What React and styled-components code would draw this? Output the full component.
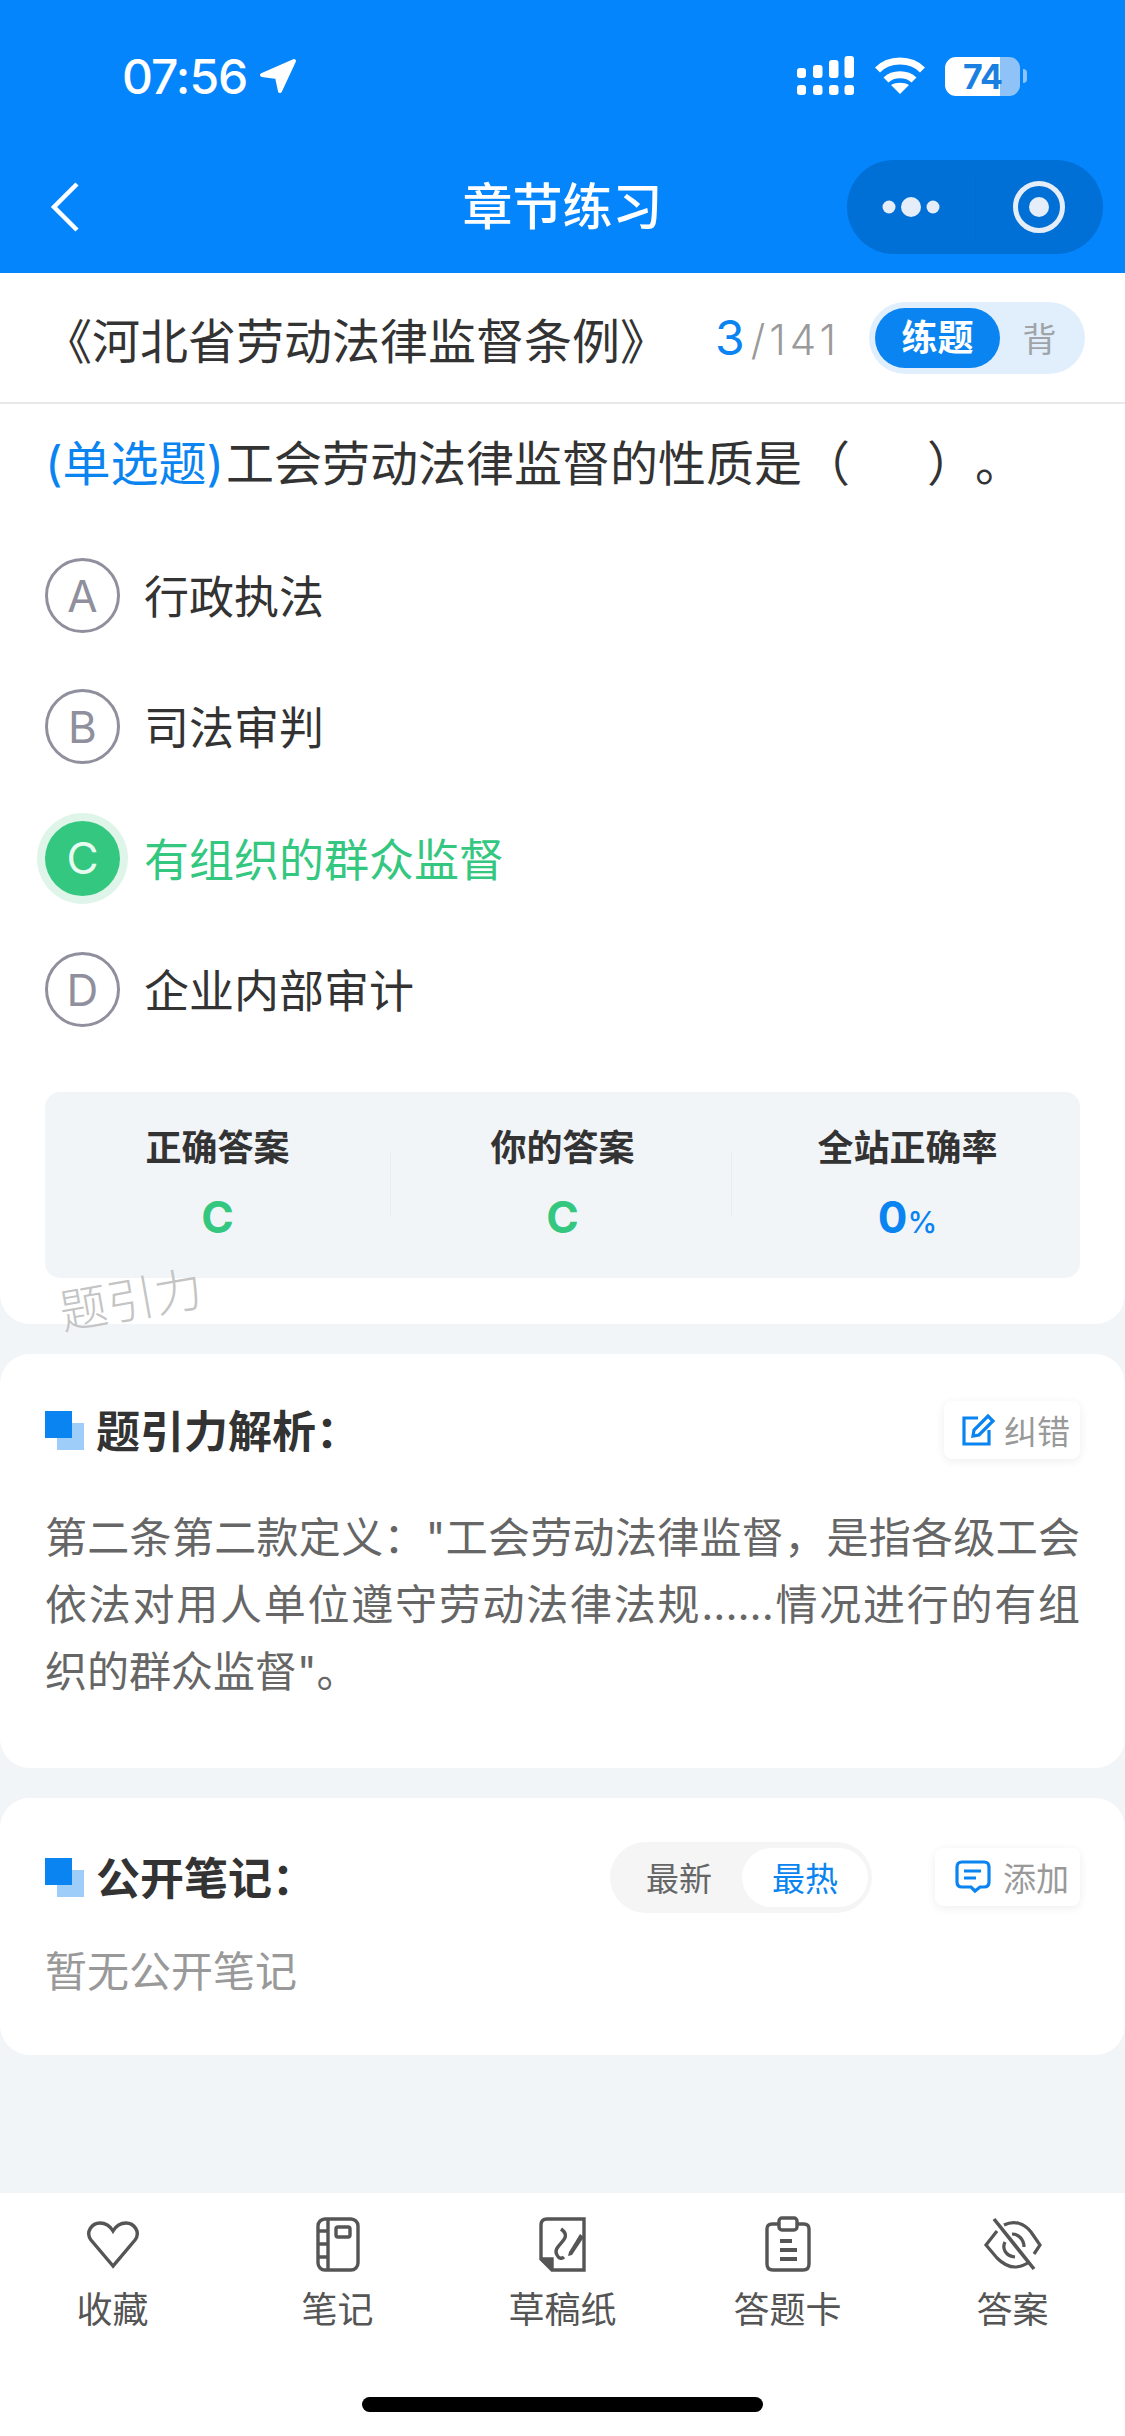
import React from 'react';
import styled, { createGlobalStyle } from 'styled-components';

const GlobalStyle = createGlobalStyle`
  html, body {
    margin: 0;
    padding: 0;
    background: #f2f5f8;
  }
  * {
    box-sizing: border-box;
  }
`;

const BLUE = '#0a84f0';
const GREEN = '#34c77f';
const FONT = '"Inter", "Noto Sans CJK SC", sans-serif';

const options = [
  { key: 'A', text: '行政执法' },
  { key: 'B', text: '司法审判' },
  { key: 'C', text: '有组织的群众监督', correct: true },
  { key: 'D', text: '企业内部审计' },
];

const LocationIcon = () => (
  <svg width="38" height="36" viewBox="0 0 38 36">
    <path d="M35 3 L3 17 L18 19 L21 33 Z" fill="#fff" stroke="#fff" strokeWidth="4" strokeLinejoin="round" />
  </svg>
);

const SignalIcon = () => (
  <svg width="58" height="40" viewBox="0 0 58 40" fill="#fff">
    <rect x="0" y="12" width="9" height="10" rx="3" />
    <rect x="0" y="29" width="9" height="10" rx="3" />
    <rect x="16" y="9" width="9.5" height="13" rx="3" />
    <rect x="16" y="29" width="9.5" height="10" rx="3" />
    <rect x="32" y="4" width="9.5" height="18" rx="3" />
    <rect x="32" y="29" width="9.5" height="10" rx="3" />
    <rect x="47.500" y="0" width="9.500" height="22" rx="3" />
    <rect x="47.500" y="29" width="9.500" height="10" rx="3" />
  </svg>
);

const WifiIcon = () => (
  <svg width="50" height="38" viewBox="0 0 50 38" fill="none" stroke="#fff" strokeWidth="7">
    <path d="M2.500 13 C14 1 36 1 47.500 13" />
    <path d="M11 23 C18 16 32 16 39 23" />
    <path d="M25 37 L16 28 C21 25 29 25 34 28 Z" fill="#fff" stroke="none" />
  </svg>
);

const BackIcon = () => (
  <svg width="30" height="50" viewBox="0 0 30 50" fill="none" stroke="#fff" strokeWidth="4.5">
    <path d="M27 2 L4 25 L27 48" />
  </svg>
);

const DotsIcon = () => (
  <svg width="58" height="24" viewBox="0 0 58 24" fill="#e4edf8">
    <circle cx="7" cy="12" r="6.5" />
    <circle cx="29" cy="12" r="10" />
    <circle cx="51" cy="12" r="6.5" />
  </svg>
);

const TargetIcon = () => (
  <svg width="54" height="54" viewBox="0 0 54 54">
    <circle cx="27" cy="27" r="23.5" fill="none" stroke="#e4edf8" strokeWidth="5" />
    <circle cx="27" cy="27" r="10" fill="#e4edf8" />
  </svg>
);

const EditIcon = () => (
  <svg width="34" height="34" viewBox="0 0 34 34" fill="none" stroke={BLUE} strokeWidth="3.2">
    <path d="M16 5 H2 V31 H27 V17" />
    <path d="M11 23 L12 17 L26 3 L31 8 L17 22 Z" />
  </svg>
);

const CommentIcon = () => (
  <svg width="36" height="34" viewBox="0 0 36 34" fill="none" stroke={BLUE} strokeWidth="3.2">
    <path d="M7 2 H29 Q34 2 34 7 V22 Q34 27 29 27 H25 L20 31 L16 27 H7 Q2 27 2 22 V7 Q2 2 7 2 Z" />
    <path d="M9 11 H26 M9 18 H21" />
  </svg>
);

const HeartIcon = () => (
  <svg width="60" height="60" viewBox="0 0 60 60" fill="none" stroke="#555" strokeWidth="3.4">
    <path d="M30 51 L8 25 C2 17 9 8 17 8 C23 8 27 11 30 16 C33 11 37 8 43 8 C51 8 58 17 52 25 Z" />
  </svg>
);

const NotebookIcon = () => (
  <svg width="60" height="60" viewBox="0 0 60 60" fill="none" stroke="#555" strokeWidth="3.4">
    <rect x="10" y="4" width="40" height="51" rx="7" />
    <path d="M20 4 V55 M10 16 H20 M10 29 H20 M10 42 H20" />
    <rect x="28" y="12" width="14" height="10" rx="2" />
  </svg>
);

const DraftIcon = () => (
  <svg width="60" height="60" viewBox="0 0 60 60" fill="none" stroke="#555" strokeWidth="3.4">
    <path d="M14 4 H51 V55 H19 L8 44 V10 Q8 4 14 4 Z" />
    <path d="M8 44 H19 V55" fill="#555" />
    <path d="M28 14 C42 24 18 30 24 40 C26 44 29 44 31 42" />
    <path d="M36 37 L47 19 L51 22 L39 40 L35 41 Z" fill="#555" stroke="none" />
  </svg>
);

const ClipboardIcon = () => (
  <svg width="60" height="60" viewBox="0 0 60 60" fill="none" stroke="#555" strokeWidth="3.4">
    <path d="M20 9 H14 Q9 9 9 14 V49 Q9 55 15 55 H45 Q51 55 51 49 V14 Q51 9 46 9 H40" />
    <rect x="21" y="3" width="18" height="12" rx="3" />
    <path d="M22 26 H34 M22 35 H39 M22 44 H39" strokeWidth="3.8" />
  </svg>
);

const EyeOffIcon = () => (
  <svg width="60" height="60" viewBox="0 0 60 60" fill="none" stroke="#555" strokeWidth="3.2">
    <path d="M14 16 L3 30 L14 43 C20 49 26 52 32 52 C37 52 42 50 46 47" />
    <path d="M21 10 C31 5 41 8 48 17 L57 30 L51 39" />
    <path d="M22 27 C19 33 22 41 32 42" />
    <path d="M29 19 C35 19 41 24 41 32" />
    <path d="M11 4 L51 54" strokeWidth="3.6" />
  </svg>
);

const tabs = [
  { label: '收藏', icon: <HeartIcon /> },
  { label: '笔记', icon: <NotebookIcon /> },
  { label: '草稿纸', icon: <DraftIcon /> },
  { label: '答题卡', icon: <ClipboardIcon /> },
  { label: '答案', icon: <EyeOffIcon /> },
];

const App = () => {
  return (
    <Page>
      <GlobalStyle />
      <Header>
        <StatusBar>
          <TimeGroup>
            <Time>07:56</Time>
            <LocationIcon />
          </TimeGroup>
          <StatusIcons>
            <SignalIcon />
            <WifiIcon />
            <Battery>
              <BatteryBody>74</BatteryBody>
              <BatteryCap />
            </Battery>
          </StatusIcons>
        </StatusBar>
        <NavBar>
          <BackSlot><BackIcon /></BackSlot>
          <NavTitle>章节练习</NavTitle>
          <Capsule>
            <CapsuleSlot><DotsIcon /></CapsuleSlot>
            <CapsuleDivider />
            <CapsuleSlot><TargetIcon /></CapsuleSlot>
          </Capsule>
        </NavBar>
      </Header>

      <Main>
        <QuestionCard>
          <TitleRow>
            <ChapterTitle>《河北省劳动法律监督条例》</ChapterTitle>
            <Counter>
              <CounterNow>3</CounterNow>
              <CounterTotal>/141</CounterTotal>
            </Counter>
            <ModeToggle>
              <ModeActive>练题</ModeActive>
              <ModeIdle>背</ModeIdle>
            </ModeToggle>
          </TitleRow>

          <Question>
            <QuestionType>(单选题)</QuestionType>工会劳动法律监督的性质是（<BlankGap />）。
          </Question>

          <OptionList>
            {options.map(o => (
              <OptionRow key={o.key}>
                <OptionBadge $correct={o.correct}>{o.key}</OptionBadge>
                <OptionText $correct={o.correct}>{o.text}</OptionText>
              </OptionRow>
            ))}
          </OptionList>

          <StatsBox>
            <StatCol>
              <StatLabel>正确答案</StatLabel>
              <StatValue $color={GREEN}>C</StatValue>
            </StatCol>
            <StatCol $dividerLeft={0}>
              <StatLabel>你的答案</StatLabel>
              <StatValue $color={GREEN}>C</StatValue>
            </StatCol>
            <StatCol $dividerLeft={-4}>
              <StatLabel>全站正确率</StatLabel>
              <StatValue $color={BLUE}>0<Percent>%</Percent></StatValue>
            </StatCol>
          </StatsBox>
          <Watermark>题引力</Watermark>
        </QuestionCard>

        <AnalysisCard>
          <SectionHead>
            <SectionTitleWrap>
              <SectionMark />
              <SectionTitle>题引力解析：</SectionTitle>
            </SectionTitleWrap>
            <SmallButton>
              <EditIcon />
              纠错
            </SmallButton>
          </SectionHead>
          <AnalysisText>
            第二条第二款定义："工会劳动法律监督，是指各级工会依法对用人单位遵守劳动法律法规......情况进行的有组织的群众监督"。
          </AnalysisText>
        </AnalysisCard>

        <NotesCard>
          <SectionHead>
            <SectionTitleWrap>
              <SectionMark />
              <SectionTitle>公开笔记：</SectionTitle>
            </SectionTitleWrap>
            <NotesActions>
              <SortToggle>
                <SortItem>最新</SortItem>
                <SortItem $active>最热</SortItem>
              </SortToggle>
              <SmallButton $wide>
                <CommentIcon />
                添加
              </SmallButton>
            </NotesActions>
          </SectionHead>
          <EmptyNotes>暂无公开笔记</EmptyNotes>
        </NotesCard>
      </Main>

      <TabBar>
        <TabRow>
          {tabs.map(t => (
            <TabItem key={t.label}>
              {t.icon}
              <TabLabel>{t.label}</TabLabel>
            </TabItem>
          ))}
        </TabRow>
        <HomeIndicator />
      </TabBar>
    </Page>
  );
};

export default App;

const Page = styled.div`
  width: 1125px;
  height: 2436px;
  display: flex;
  flex-direction: column;
  overflow: hidden;
  background: #f2f5f8;
  font-family: ${FONT};
`;

const Header = styled.div`
  height: 273px;
  flex-shrink: 0;
  background: #0585fb;
  display: flex;
  flex-direction: column;
`;

const StatusBar = styled.div`
  height: 160px;
  padding: 54px 98px 0 122px;
  display: flex;
  justify-content: space-between;
  align-items: flex-start;
`;

const TimeGroup = styled.div`
  display: flex;
  align-items: center;
  gap: 12px;
  height: 44px;
`;

const Time = styled.span`
  font-family: "Inter", sans-serif;
  font-size: 48px;
  font-weight: 500;
  letter-spacing: -1px;
  color: #fff;
`;

const StatusIcons = styled.div`
  display: flex;
  align-items: center;
  gap: 20px;
  height: 44px;
`;

const Battery = styled.div`
  display: flex;
  align-items: center;
  gap: 3px;
`;

const BatteryBody = styled.div`
  width: 75px;
  height: 39px;
  border-radius: 11px;
  background: linear-gradient(90deg, #fff 0 73%, #8fc3f8 73% 100%);
  color: #1a7fe0;
  font-family: "Inter", sans-serif;
  font-size: 34px;
  font-weight: 700;
  line-height: 39px;
  text-align: center;
  letter-spacing: -1px;
`;

const BatteryCap = styled.div`
  width: 4px;
  height: 14px;
  border-radius: 0 4px 4px 0;
  background: #8fc3f8;
`;

const NavBar = styled.div`
  height: 113px;
  padding: 0 22px 19px;
  display: grid;
  grid-template-columns: 1fr auto 1fr;
  align-items: center;
`;

const BackSlot = styled.div`
  padding-left: 28px;
  display: flex;
  align-items: center;
`;

const NavTitle = styled.div`
  font-size: 50px;
  line-height: 58px;
  font-weight: 500;
  color: #fff;
`;

const Capsule = styled.div`
  justify-self: end;
  width: 256px;
  height: 94px;
  border-radius: 47px;
  background: #006fd6;
  display: flex;
  align-items: center;
`;

const CapsuleSlot = styled.div`
  flex: 1;
  display: flex;
  align-items: center;
  justify-content: center;
`;

const CapsuleDivider = styled.div`
  width: 1px;
  height: 66px;
  background: #036bcd;
`;

const Main = styled.div`
  flex: 1;
  display: flex;
  flex-direction: column;
  gap: 30px;
`;

const Card = styled.div`
  background: #fff;
  border-radius: 30px;
`;

const QuestionCard = styled(Card)`
  position: relative;
  height: 1051px;
  border-radius: 0 0 30px 30px;
`;

const TitleRow = styled.div`
  height: 131px;
  padding: 0 40px 0 44px;
  border-bottom: 2px solid #e6e8ea;
  display: flex;
  align-items: center;
`;

const ChapterTitle = styled.div`
  width: 671px;
  font-size: 48px;
  color: #333;
  white-space: nowrap;
`;

const Counter = styled.div`
  flex: 1;
  display: flex;
  align-items: baseline;
  font-family: "Inter", sans-serif;
`;

const CounterNow = styled.span`
  font-size: 48px;
  color: ${BLUE};
`;

const CounterTotal = styled.span`
  font-size: 42px;
  font-weight: 300;
  letter-spacing: 4px;
  color: #9a9a9a;
  margin-left: 6px;
`;

const ModeToggle = styled.div`
  width: 216px;
  height: 72px;
  border-radius: 36px;
  background: #e1effc;
  padding: 6px;
  display: flex;
  align-items: center;
`;

const ModeActive = styled.div`
  width: 125px;
  height: 60px;
  border-radius: 30px;
  background: ${BLUE};
  color: #fff;
  font-size: 36px;
  font-weight: 700;
  line-height: 60px;
  text-align: center;
`;

const ModeIdle = styled.div`
  flex: 1;
  text-align: center;
  font-size: 34px;
  color: #a0a4a8;
`;

const Question = styled.div`
  padding: 30px 45px 0;
  font-size: 48px;
  line-height: 60px;
  color: #333;
  white-space: nowrap;
  text-spacing-trim: space-all;
`;

const QuestionType = styled.span`
  color: ${BLUE};
  margin-right: 2px;
`;

const BlankGap = styled.span`
  display: inline-block;
  width: 77px;
`;

const OptionList = styled.div`
  padding: 36px 45px 0;
  display: flex;
  flex-direction: column;
`;

const OptionRow = styled.div`
  height: 131.3px;
  display: flex;
  align-items: center;
  gap: 24px;
`;

const OptionBadge = styled.div`
  width: 75px;
  height: 75px;
  border-radius: 50%;
  flex-shrink: 0;
  font-family: "Inter", sans-serif;
  font-size: 44px;
  font-weight: 400;
  display: flex;
  align-items: center;
  justify-content: center;
  color: ${p => (p.$correct ? '#e8fbf1' : '#8f8f9d')};
  background: ${p => (p.$correct ? GREEN : '#fff')};
  border: ${p => (p.$correct ? 'none' : '3px solid #8f8f9d')};
  box-shadow: ${p => (p.$correct ? '0 0 0 8px #e0f5ea' : 'none')};
`;

const OptionText = styled.div`
  font-size: 45px;
  margin-top: -2px;
  color: ${p => (p.$correct ? GREEN : '#333')};
`;

const StatsBox = styled.div`
  margin: 37px 45px 0;
  height: 186px;
  border-radius: 15px;
  background: #f2f5f8;
  display: flex;
`;

const StatCol = styled.div`
  flex: 1;
  position: relative;
  display: flex;
  flex-direction: column;
  align-items: center;
  padding-top: 33px;

  ${p => p.$dividerLeft !== undefined && `
    &::before {
      content: '';
      position: absolute;
      left: ${p.$dividerLeft}px;
      top: 60px;
      height: 64px;
      width: 1px;
      background: #e9edf0;
    }
  `}
`;

const StatLabel = styled.div`
  font-size: 36px;
  line-height: 46px;
  font-weight: 700;
  color: #333;
`;

const StatValue = styled.div`
  margin-top: 19px;
  font-family: "Inter", sans-serif;
  font-size: 44px;
  line-height: 54px;
  font-weight: 700;
  color: ${p => p.$color};
`;

const Percent = styled.span`
  font-size: 30px;
  font-weight: 500;
`;

const Watermark = styled.div`
  position: absolute;
  left: 60px;
  top: 1010px;
  font-size: 48px;
  font-weight: 300;
  line-height: 60px;
  color: #c4c4c4;
  transform: rotate(-10deg);
  transform-origin: left center;
`;

const AnalysisCard = styled(Card)`
  height: 414px;
  padding: 46px 45px 0;
`;

const NotesCard = styled(Card)`
  height: 257px;
  padding: 49px 45px 0;
`;

const SectionHead = styled.div`
  height: 60px;
  display: flex;
  align-items: center;
  justify-content: space-between;
`;

const SectionTitleWrap = styled.div`
  display: flex;
  align-items: center;
`;

const SectionMark = styled.div`
  width: 39px;
  height: 39px;
  position: relative;
  margin-right: 12px;
  &::before {
    content: '';
    position: absolute;
    right: 0;
    bottom: 0;
    width: 27px;
    height: 27px;
    background: #9dcdf8;
  }
  &::after {
    content: '';
    position: absolute;
    left: 0;
    top: 0;
    width: 27px;
    height: 27px;
    background: ${BLUE};
  }
`;

const SectionTitle = styled.div`
  margin-top: -3px;
  font-size: 44px;
  font-weight: 700;
  color: #333;
`;

const SmallButton = styled.div`
  height: 58px;
  padding: ${p => (p.$wide ? '0 11px 0 20px' : '0 10px 0 18px')};
  display: flex;
  align-items: center;
  gap: ${p => (p.$wide ? '12px' : '8px')};
  border-radius: 8px;
  background: #fff;
  box-shadow: 0 2px 10px rgba(0, 0, 0, 0.07);
  font-size: 33px;
  color: #999;
`;

const AnalysisText = styled.div`
  margin-top: 44px;
  font-size: 42px;
  line-height: 67px;
  color: #666;
  text-align: justify;
`;

const NotesActions = styled.div`
  display: flex;
  align-items: center;
  gap: 63px;
`;

const SortToggle = styled.div`
  width: 262px;
  height: 71px;
  border-radius: 36px;
  background: #f5f5f6;
  padding: 6px 4px 6px 6px;
  display: flex;
`;

const SortItem = styled.div`
  flex: 1;
  border-radius: 30px;
  font-size: 33px;
  display: flex;
  align-items: center;
  justify-content: center;
  color: ${p => (p.$active ? BLUE : '#666')};
  background: ${p => (p.$active ? '#fff' : 'transparent')};
`;

const EmptyNotes = styled.div`
  margin-top: 37px;
  font-size: 42px;
  line-height: 56px;
  color: #999;
`;

const TabBar = styled.div`
  height: 243px;
  flex-shrink: 0;
  background: #fff;
  display: flex;
  flex-direction: column;
  align-items: center;
  position: relative;
`;

const TabRow = styled.div`
  width: 100%;
  padding-top: 22px;
  display: grid;
  grid-template-columns: repeat(5, 225px);
`;

const TabItem = styled.div`
  display: flex;
  flex-direction: column;
  align-items: center;
`;

const TabLabel = styled.div`
  margin-top: 12px;
  font-size: 36px;
  line-height: 46px;
  color: #555;
`;

const HomeIndicator = styled.div`
  position: absolute;
  bottom: 24px;
  width: 401px;
  height: 15px;
  border-radius: 8px;
  background: #000;
`;
